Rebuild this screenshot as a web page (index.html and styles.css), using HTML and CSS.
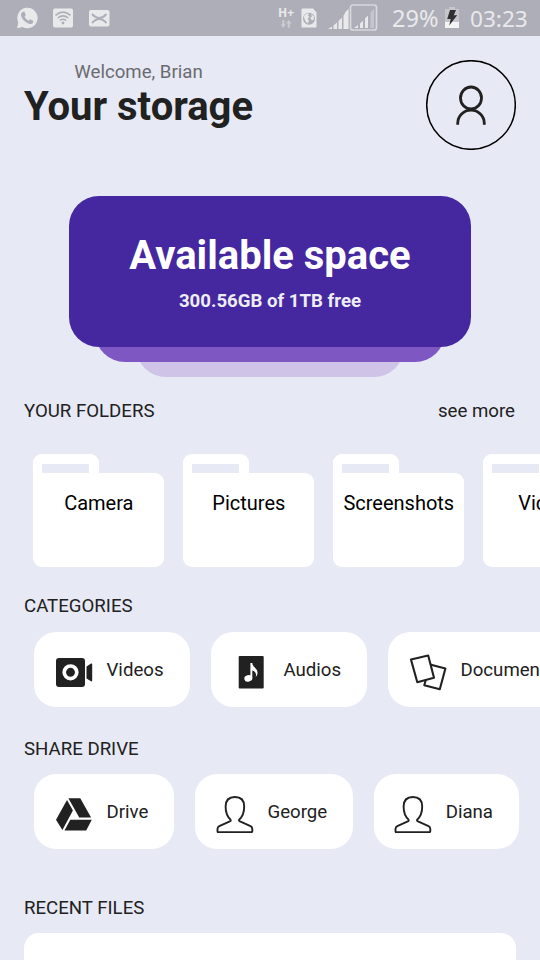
FILE: index.html
```html
<!DOCTYPE html>
<html lang="en">
<head>
<meta charset="utf-8">
<title>Your storage</title>
<link rel="stylesheet" href="styles.css">
</head>
<body>
<svg class="defs" aria-hidden="true">
  <symbol id="person" viewBox="0 0 38 38">
    <path d="M14.7 24.7C11.5 22 9.6 17 9.6 11.5C9.6 5.5 13 2 18.9 2S28.2 5.5 28.2 11.5C28.2 17 26.300 22 23.100 24.700C22.900 25.300 23.200 26 24 26.400L34.500 31.100C35.900 31.800 36.300 32.500 36.300 34V36.100C36.300 37 36 37.200 35.300 37.200H2.500C1.800 37.200 1.500 37 1.500 36.100V34C1.500 32.500 1.900 31.800 3.300 31.100L13.800 26.400C14.600 26 14.900 25.300 14.700 24.700" fill="none" stroke="#212121" stroke-width="1.9"/>
  </symbol>
</svg>
<div class="status">
  <div class="status-left">
    <svg width="22" height="22" viewBox="0 0 22 22"><path d="M1 21.300L2.300 15.500A10.200 10.200 0 1 1 6.500 19.900Z" fill="#e9e9ec"/><path d="M6 5.200L8.300 4.600L9.800 8L8.500 9.700Q10 12.500 12.700 13.700L14.200 12.300L17.400 13.900L16.700 16.300Q15 17.700 12.200 16.500Q6.500 14 5 8.500Q4.800 6.500 6 5.200Z" fill="#aeaeb8"/></svg>
    <svg width="20" height="20" viewBox="0 0 20 20"><rect width="20" height="19" x="0" y="0.500" rx="2" fill="#e9e9ec"/><g fill="none" stroke="#aeaeb8" stroke-width="1.600"><path d="M2.500 7.300Q10 1 17.500 7.300M4.700 10Q10 5.700 15.300 10M6.900 12.500Q10 10 13.100 12.500"/></g><circle cx="10" cy="15" r="1.400" fill="#aeaeb8"/></svg>
    <svg width="21" height="17" viewBox="0 0 21 17"><rect width="20.500" height="16.500" rx="2" fill="#e9e9ec"/><path d="M3 4Q10.300 12 17.500 4M3 13Q10.300 5 17.500 13" fill="none" stroke="#aeaeb8" stroke-width="1.900"/></svg>
  </div>
  <div class="network"><span>H+</span>
    <svg width="12" height="8" viewBox="0 0 12 8"><path d="M2.300 0H4.300V4.300H6L3.300 7.800L.5 4.300H2.300ZM7.800 7.800H9.800V3.500H11.500L8.800 0L6 3.500H7.800Z" fill="#cbcbd1"/></svg>
  </div>
  <svg class="sim" width="16" height="20" viewBox="0 0 16 20"><path d="M1.500.5H12L15.500 4.500V19.500H.5V1.500Z" fill="#e9e9ec"/><circle cx="8" cy="10.800" r="6" fill="#aeaeb8"/><path d="M3 8Q5 5.500 8 5.300L7 7.500L8.500 9L6.500 10.500L8 13L6.500 15.500Q3 12 3 8ZM10 6L13 8.500L12.500 12L10.500 12L9.300 9.500L11 8.500Z" fill="#e9e9ec"/></svg>
  <svg class="bars" width="50" height="28" viewBox="0 0 50 28"><g fill="#e9e9ec"><path d="M0 25L4 22.500V25ZM5.500 21.500L9 18.500V25H5.500ZM10.500 17L14 13.500V25H10.500ZM15.500 11.500L18.500 8V25H15.500ZM16.800 9L20.500 4.500V25H16.800Z"/><path d="M26 24L30 21V24ZM32 19.500L35 16.700V24H32ZM37 14.500L40 11.500V24H37Z"/></g><path d="M42.500 8.500L46 5V24H42.500Z" fill="#c5c5cc"/><rect x="22.500" y="1" width="26" height="25" rx="2.500" fill="none" stroke="#d8d8dd" stroke-width="1.700"/></svg>
  <span class="percent">29%</span>
  <svg class="battery" width="14" height="21" viewBox="0 0 14 21"><path d="M4 0H10V2H14V21H0V2H4Z" fill="#c5c5cb"/><path d="M0 15H14V21H0Z" fill="#f4f4f5"/><path d="M5 3H11L8.800 8.200L12.200 8.200L4.200 18.500L5.700 12H2.200Z" fill="#303033"/></svg>
  <span class="clock">03:23</span>
</div>
<main>
  <header>
    <div class="heading">
      <p class="welcome">Welcome, Brian</p>
      <h1>Your storage</h1>
    </div>
    <div class="avatar">
      <svg width="90" height="90" viewBox="0 0 90 90"><circle cx="45" cy="45" r="44.300" fill="none" stroke="#000" stroke-width="1.500"/><g fill="none" stroke="#212121" stroke-width="2.800"><ellipse cx="45" cy="38" rx="10.500" ry="11"/><path d="M31.700 64.700V63.500A13.300 13.300 0 0 1 58.300 63.500V64.700"/></g></svg>
    </div>
  </header>
  <section class="stack">
    <div class="layer layer-back"></div>
    <div class="layer layer-mid"></div>
    <div class="space">
      <h2>Available space</h2>
      <p>300.56GB of 1TB free</p>
    </div>
  </section>
  <div class="title folders-title"><span>YOUR FOLDERS</span><span class="more">see more</span></div>
  <div class="folders">
    <div class="folder"><i></i><div>Camera</div></div>
    <div class="folder"><i></i><div>Pictures</div></div>
    <div class="folder"><i></i><div>Screenshots</div></div>
    <div class="folder"><i></i><div>Videos</div></div>
  </div>
  <div class="title cat-title">CATEGORIES</div>
  <div class="chips categories">
    <div class="chip wide"><svg width="38" height="38" viewBox="0 0 38 38"><rect x="1" y="5" width="29" height="29" rx="3" fill="#212121"/><circle cx="15.500" cy="19.300" r="6.300" fill="none" stroke="#fff" stroke-width="3.700"/><path d="M31.500 13.500L36 10.500Q37.200 10 37.200 11.500V27Q37.200 29 36 28.200L31.500 25.500Z" fill="#212121"/></svg><span>Videos</span></div>
    <div class="chip wide"><svg width="38" height="38" viewBox="0 0 38 38"><rect x="6.700" y="3" width="25" height="32.500" rx="1" fill="#212121"/><ellipse cx="16.300" cy="25.400" rx="4" ry="3.300" fill="#fff" transform="rotate(-15 16.300 25.400)"/><path d="M18.400 10H20.300C20.300 14.500 26 14.500 25.500 20.500Q25.200 22.500 23.600 24.300Q25.300 19 20.300 17.500V25.500H18.400Z" fill="#fff"/></svg><span>Audios</span></div>
    <div class="chip docs"><svg width="38" height="38" viewBox="0 0 38 38"><g fill="#fff" stroke="#212121" stroke-width="2.100" stroke-linejoin="round"><path d="M21 11.500L36.400 15.600L30.800 36.300L15.300 32.300Z"/><path d="M2 6.600L19.200 2.600L25 24.800L8.300 29.200Z"/></g></svg><span>Documents</span></div>
  </div>
  <div class="title share-title">SHARE DRIVE</div>
  <div class="chips share">
    <div class="chip drive"><svg width="38" height="38" viewBox="0 0 38 38"><g fill="#212121"><path d="M13.400 3.300H25.300L36.100 22.600H24.200Z"/><path d="M12 5L17.900 15.600L7.400 35.100L1 24.800Z"/><path d="M15.300 24.700H36.800L31.200 35.600H9.500Z"/></g></svg><span>Drive</span></div>
    <div class="chip george"><svg width="38" height="38"><use href="#person"/></svg><span>George</span></div>
    <div class="chip diana"><svg width="38" height="38"><use href="#person"/></svg><span>Diana</span></div>
  </div>
  <div class="title recent-title">RECENT FILES</div>
  <div class="recent"></div>
</main>
</body>
</html>
```
FILE: styles.css
```css
* { box-sizing: border-box; margin: 0; padding: 0; }
body { width: 540px; height: 960px; overflow: hidden; background: #e7e9f5; color: #212121; font-family: Roboto, sans-serif; font-size: 18.650px; }
svg { display: block; flex: none; }
.defs { display: none; }
.status { height: 36px; background: #aeaeb8; color: #e9e9ec; display: flex; align-items: center; font-family: "Noto Sans", sans-serif; font-size: 22.600px; white-space: nowrap; }
.status-left { display: flex; align-items: center; gap: 16px; padding-left: 16px; width: 278px; }
.status-left svg:nth-child(2) { margin-left: -1px; }
.network { width: 23px; height: 24px; font: bold 12px/13px "Noto Sans", sans-serif; }
.network svg { margin: 1px 0 0 2px; }
.bars { margin-left: 11px; }
.percent { width: 53px; margin-left: 14px; font-size: 23.500px; }
.battery { margin-top: -2px; }
.clock { margin-left: 11px; }
main { height: 924px; overflow: hidden; }
header { display: flex; justify-content: space-between; height: 160px; padding: 24px 24px 0; }
.heading { width: 229px; }
.welcome { color: #6b6b70; line-height: 22px; text-align: center; padding-top: 1px; }
h1 { font-size: 40px; line-height: 48px; font-weight: 700; white-space: nowrap; }
.avatar { width: 90px; height: 90px; }
.stack { display: grid; justify-items: center; width: 402px; height: 181px; margin: 0 auto; align-items: start; }
.stack > * { grid-area: 1 / 1; }
.layer { height: 150px; border-radius: 30px; }
.layer-back { width: 268px; margin-top: 30.500px; background: #cfc4e8; }
.layer-mid { width: 350px; height: 165.500px; background: #7e57c2; }
.space { width: 402px; height: 150.500px; border-radius: 30px; background: #4527a0; text-align: center; padding-top: 36px; }
h2 { color: #fff; font-size: 40px; line-height: 48px; font-weight: 700; }
.space p { color: #ededf3; font-weight: 700; line-height: 22px; margin-top: 10px; }
.title { line-height: 22px; padding: 0 24px; }
.folders-title { display: flex; justify-content: space-between; padding-right: 25px; margin-top: 23px; }
.folders { display: flex; gap: 19px; margin: 32px 0 0 33px; height: 113px; }
.folder { flex: none; width: 131px; }
.folder i { display: block; width: 66px; height: 19px; border: solid #fff; border-width: 10px 10px 0 9px; border-radius: 9px 9px 0 0; }
.folder div { height: 94px; border-radius: 0 9px 9px 9px; background: #fff; color: #000; font-size: 20px; line-height: 24px; padding: 18px 0 0 .6px; text-align: center; }
.cat-title { margin-top: 28px; }
.chips { display: flex; padding-left: 34.400px; gap: 21px; }
.chip { flex: none; display: flex; align-items: center; height: 75px; border-radius: 22px; background: #fff; padding-left: 20.600px; }
.chip svg { margin-top: 5px; }
.chip span { margin-left: 13.500px; }
.wide { width: 156px; }
.docs { width: 190px; }
.categories { margin-top: 15px; }
.share-title { margin-top: 31px; }
.share { margin-top: 14px; }
.drive { width: 139.500px; }
.george { width: 157.700px; padding-left: 21.100px; }
.diana { width: 145.500px; }
.recent-title { margin-top: 48px; }
.recent { margin: 14px 24px 0; height: 60px; border-radius: 15px; background: #fff; }
```
